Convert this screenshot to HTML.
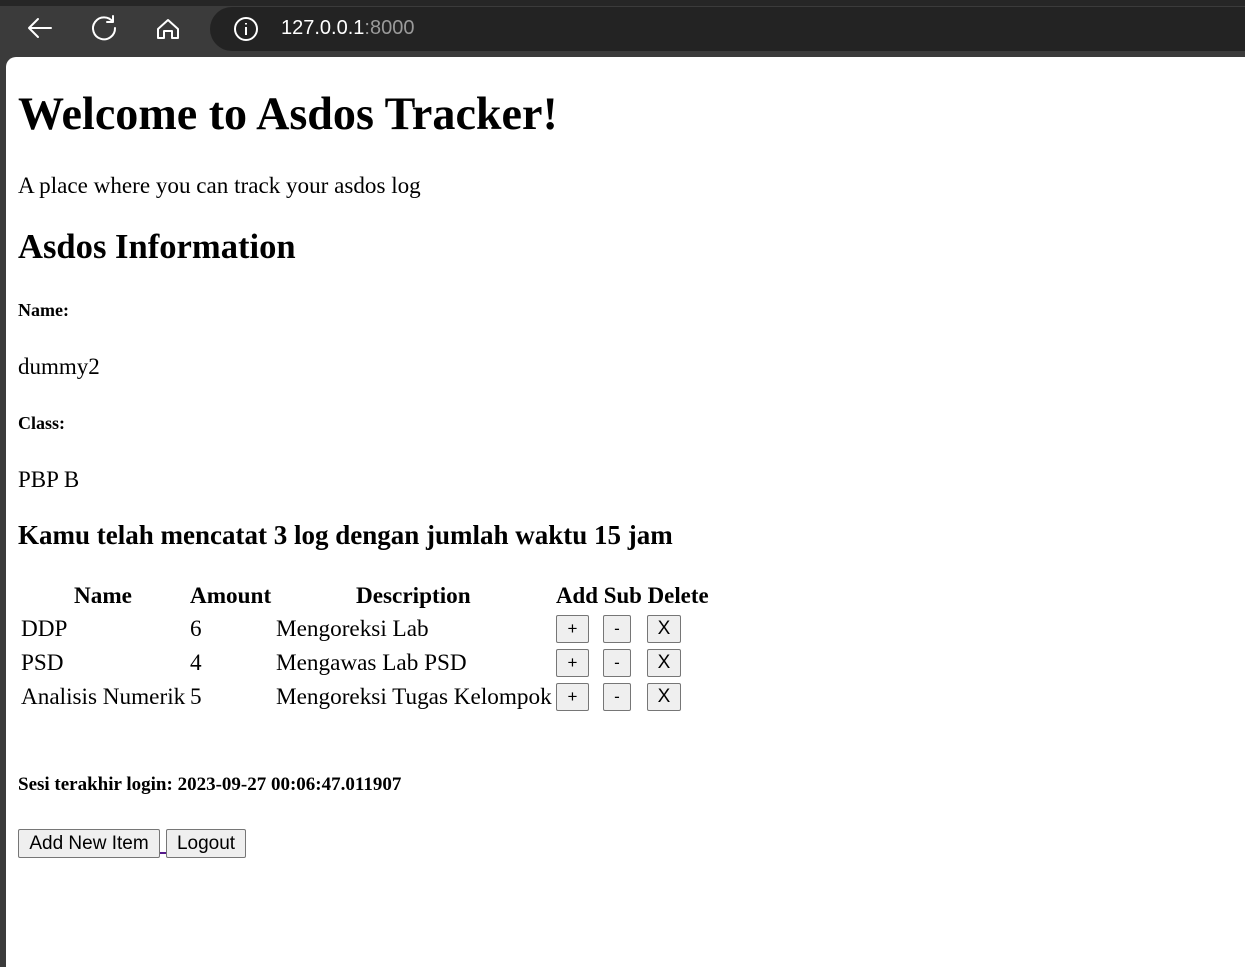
<!DOCTYPE html>
<html><head><style>
*{margin:0;padding:0;box-sizing:border-box}
body{width:1245px;height:958px;background:#3b3b3b;position:relative;overflow:hidden;font-family:"Liberation Serif",serif;color:#000}
.top{position:absolute;left:0;top:0;width:1245px;height:6px;background:#262626}
.url{position:absolute;left:210px;top:7px;width:1100px;height:44px;border-radius:22px;background:#232323}
.page{position:absolute;left:6px;top:57px;width:1245px;height:910px;background:#fff;border-top-left-radius:10px}
.t{position:absolute;white-space:nowrap}
.b{font-weight:bold}
.btn{position:absolute;background:#efefef;border:1px solid #767676;border-radius:2px;font-family:"Liberation Sans",sans-serif;font-size:19px;text-align:center;color:#000}
.r{font-size:23.2px;line-height:26px}
</style></head><body>
<div class="top"></div>
<svg style="position:absolute;left:0;top:0" width="200" height="56">
<g fill="none" stroke="#fff" stroke-width="2" stroke-linecap="round" stroke-linejoin="round">
<path d="M29 28h22M29 28l9-9M29 28l9 9"/>
<path d="M113 22a11 11 0 1 0 2 6M113 16v6h-6"/>
<path d="M158 29l10-9 10 9v9h-6v-7h-8v7h-6z"/>
</g></svg>
<div class="url"></div>
<svg style="position:absolute;left:233px;top:16px" width="26" height="26"><circle cx="13" cy="13" r="11" fill="none" stroke="#fff" stroke-width="2"/><path d="M13 11v8M13 7v1.5" stroke="#fff" stroke-width="2"/></svg>
<div class="t" style="left:281px;top:17px;font:20px 'Liberation Sans',sans-serif;color:#fff">127.0.0.1<span style="color:#9a9a9a">:8000</span></div>
<div class="page"></div>
<div class="t b" style="left:18px;top:87px;font-size:46.1px;line-height:54px">Welcome to Asdos Tracker!</div>
<div class="t" style="left:18px;top:171px;font-size:23.1px;line-height:28px">A place where you can track your asdos log</div>
<div class="t b" style="left:18px;top:228px;font-size:34.6px;line-height:38px">Asdos Information</div>
<div class="t b" style="left:18px;top:300px;font-size:18px;line-height:20px">Name:</div>
<div class="t" style="left:18px;top:353px;font-size:23px;line-height:28px">dummy2</div>
<div class="t b" style="left:18px;top:413px;font-size:18px;line-height:20px">Class:</div>
<div class="t" style="left:18px;top:466px;font-size:23px;line-height:28px">PBP B</div>
<div class="t b" style="left:18px;top:520px;font-size:27px;line-height:30px">Kamu telah mencatat 3 log dengan jumlah waktu 15 jam</div>
<div class="t b r" style="left:74px;top:583px">Name</div>
<div class="t b r" style="left:190px;top:583px">Amount</div>
<div class="t b r" style="left:356px;top:583px">Description</div>
<div class="t b r" style="left:556px;top:583px;font-size:22.9px">Add Sub Delete</div>
<div class="t r" style="left:21px;top:616px">DDP</div>
<div class="t r" style="left:190px;top:616px">6</div>
<div class="t r" style="left:276px;top:616px">Mengoreksi Lab</div>
<div class="t r" style="left:21px;top:650px">PSD</div>
<div class="t r" style="left:190px;top:650px">4</div>
<div class="t r" style="left:276px;top:650px">Mengawas Lab PSD</div>
<div class="t r" style="left:21px;top:684px">Analisis Numerik</div>
<div class="t r" style="left:190px;top:684px">5</div>
<div class="t r" style="left:276px;top:684px">Mengoreksi Tugas Kelompok</div>
<div class="btn" style="left:556px;top:615px;width:33px;height:28px;line-height:26px;font-size:17px">+</div>
<div class="btn" style="left:603px;top:615px;width:28px;height:28px;line-height:26px;font-size:17px">-</div>
<div class="btn" style="left:647px;top:615px;width:34px;height:28px;line-height:26px">X</div>
<div class="btn" style="left:556px;top:649px;width:33px;height:28px;line-height:26px;font-size:17px">+</div>
<div class="btn" style="left:603px;top:649px;width:28px;height:28px;line-height:26px;font-size:17px">-</div>
<div class="btn" style="left:647px;top:649px;width:34px;height:28px;line-height:26px">X</div>
<div class="btn" style="left:556px;top:683px;width:33px;height:28px;line-height:26px;font-size:17px">+</div>
<div class="btn" style="left:603px;top:683px;width:28px;height:28px;line-height:26px;font-size:17px">-</div>
<div class="btn" style="left:647px;top:683px;width:34px;height:28px;line-height:26px">X</div>
<div class="t b" style="left:18px;top:775px;font-size:19px;line-height:20px">Sesi terakhir login: 2023-09-27 00:06:47.011907</div>
<div class="btn" style="left:18px;top:829px;width:142px;height:29px;line-height:27px">Add New Item</div>
<div style="position:absolute;left:160px;top:852px;width:6px;height:2px;background:#551a8b"></div>
<div class="btn" style="left:166px;top:829px;width:80px;height:29px;line-height:27px">Logout</div>
</body></html>
